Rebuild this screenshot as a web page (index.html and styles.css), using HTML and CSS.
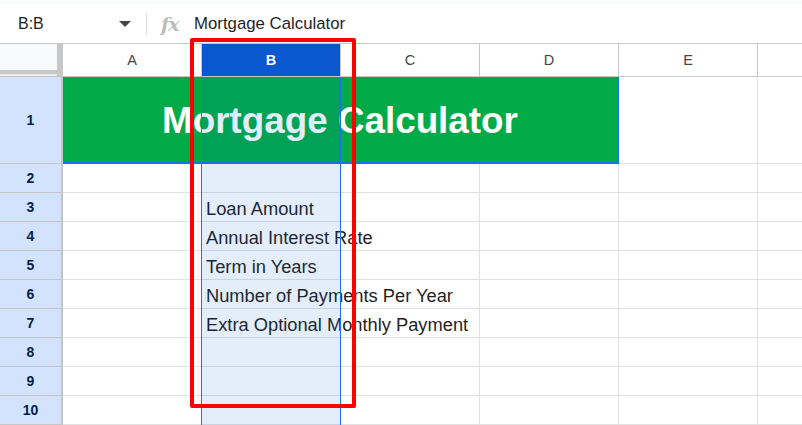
FILE: index.html
```html
<!DOCTYPE html>
<html>
<head>
<meta charset="utf-8">
<link rel="stylesheet" href="styles.css">
</head>
<body>
<div class="app">
  <div class="fbar">
    <div class="namebox">
      <span class="ref">B:B</span>
      <svg class="caret" width="12" height="6" viewBox="0 0 12 6"><path d="M0 0 L12 0 L6 6 Z" fill="#444746"/></svg>
    </div>
    <div class="sep"></div>
    <span class="fx">fx</span>
    <span class="ftext">Mortgage Calculator</span>
  </div>
  <div class="sheet">
    <div class="corner"></div>
    <div class="ch">A</div><div class="ch sel">B</div><div class="ch">C</div><div class="ch">D</div><div class="ch">E</div><div class="ch last"></div>

    <div class="rh">1</div><div class="title">Mortgage Calculator</div><div class="c"></div><div class="c last"></div>

    <div class="rh">2</div><div class="c"></div><div class="c"></div><div class="c"></div><div class="c"></div><div class="c"></div><div class="c last"></div>
    <div class="rh">3</div><div class="c"></div><div class="c txt">Loan Amount</div><div class="c"></div><div class="c"></div><div class="c"></div><div class="c last"></div>
    <div class="rh">4</div><div class="c"></div><div class="c txt">Annual Interest Rate</div><div class="c"></div><div class="c"></div><div class="c"></div><div class="c last"></div>
    <div class="rh">5</div><div class="c"></div><div class="c txt">Term in Years</div><div class="c"></div><div class="c"></div><div class="c"></div><div class="c last"></div>
    <div class="rh">6</div><div class="c"></div><div class="c txt">Number of Payments Per Year</div><div class="c"></div><div class="c"></div><div class="c"></div><div class="c last"></div>
    <div class="rh">7</div><div class="c"></div><div class="c txt">Extra Optional Monthly Payment</div><div class="c"></div><div class="c"></div><div class="c"></div><div class="c last"></div>
    <div class="rh">8</div><div class="c"></div><div class="c"></div><div class="c"></div><div class="c"></div><div class="c"></div><div class="c last"></div>
    <div class="rh">9</div><div class="c"></div><div class="c"></div><div class="c"></div><div class="c"></div><div class="c"></div><div class="c last"></div>
    <div class="rh">10</div><div class="c"></div><div class="c"></div><div class="c"></div><div class="c"></div><div class="c"></div><div class="c last"></div>

    <div class="colsel"></div>
  </div>
  <div class="callout"></div>
</div>
</body>
</html>
```

FILE: styles.css
```css
html, body {
  margin: 0;
  padding: 0;
  background: #ffffff;
  overflow: hidden;
}
body {
  font-family: "Liberation Sans", Arial, sans-serif;
  color: #1f1f1f;
}
.app {
  position: relative;
  width: 802px;
  height: 425px;
  overflow: hidden;
}
.fbar {
  height: 39px;
  border-top: 4px solid #f9fbfd;
  border-bottom: 1px solid #c4c7c5;
  display: flex;
  align-items: center;
  padding-left: 18px;
  box-sizing: content-box;
}
.namebox {
  width: 113px;
  display: flex;
  align-items: center;
  justify-content: space-between;
}
.ref {
  font-size: 16px;
  color: #1f1f1f;
}
.caret {
  display: block;
  margin-top: 1px;
}
.sep {
  width: 1px;
  height: 22px;
  background: #dadce0;
  margin-left: 15px;
}
.fx {
  margin-left: 14px;
  width: 20px;
  font-family: "DejaVu Serif", "Liberation Serif", serif;
  font-style: italic;
  font-weight: bold;
  font-size: 19px;
  color: #bcbcbc;
  letter-spacing: -1px;
}
.ftext {
  margin-left: 13px;
  font-size: 16.8px;
  color: #1f1f1f;
}
.sheet {
  position: relative;
  display: grid;
  grid-template-columns: 63px repeat(5, 139px) 1fr;
  grid-template-rows: 33px 87px repeat(9, 29px);
}
.sheet > div {
  box-sizing: border-box;
}
.corner {
  background: #f8f9fa;
  border-right: 6px solid #c7c7c7;
  border-bottom: 1px solid #c4c7c5;
  box-shadow: inset 0 -2px 0 #eceeef, inset 0 -6px 0 #c7c7c7;
}
.ch {
  display: flex;
  align-items: center;
  justify-content: center;
  font-size: 14.5px;
  color: #444746;
  background: #ffffff;
  border-right: 1px solid #c4c7c5;
  border-bottom: 1px solid #c4c7c5;
}
.ch.sel {
  background: #0b57d0;
  color: #ffffff;
  font-weight: bold;
}
.ch.last, .c.last {
  border-right: none;
}
.rh {
  display: flex;
  align-items: center;
  justify-content: center;
  background: #d3e3fd;
  color: #041e49;
  font-weight: bold;
  font-size: 14px;
  border-right: 2px solid #c4c7c5;
  border-bottom: 1px solid #c4c7c5;
}
.c {
  border-right: 1px solid #e1e1e1;
  border-bottom: 1px solid #e1e1e1;
}
.title {
  grid-column: span 4;
  display: flex;
  align-items: center;
  justify-content: center;
  background: #00ab47;
  color: #ffffff;
  font-weight: bold;
  font-size: 36.8px;
  border-right: 2px solid #1a73e8;
  border-bottom: 2px solid #1a73e8;
  padding-top: 2px;
}
.txt {
  display: flex;
  align-items: flex-end;
  white-space: nowrap;
  font-size: 18.3px;
  line-height: 20px;
  padding-left: 4px;
  padding-bottom: 2px;
  color: #1f1f1f;
}
.colsel {
  position: absolute;
  left: 201px;
  top: 33px;
  width: 140px;
  bottom: 0;
  background: rgba(11, 87, 208, 0.11);
  border-left: 1px solid #1a73e8;
  border-right: 1px solid #1a73e8;
  box-sizing: border-box;
  pointer-events: none;
}
.callout {
  position: absolute;
  left: 190px;
  top: 38px;
  width: 166px;
  height: 370px;
  box-sizing: border-box;
  border: 4px solid #ff0000;
  border-radius: 2px;
}
```
